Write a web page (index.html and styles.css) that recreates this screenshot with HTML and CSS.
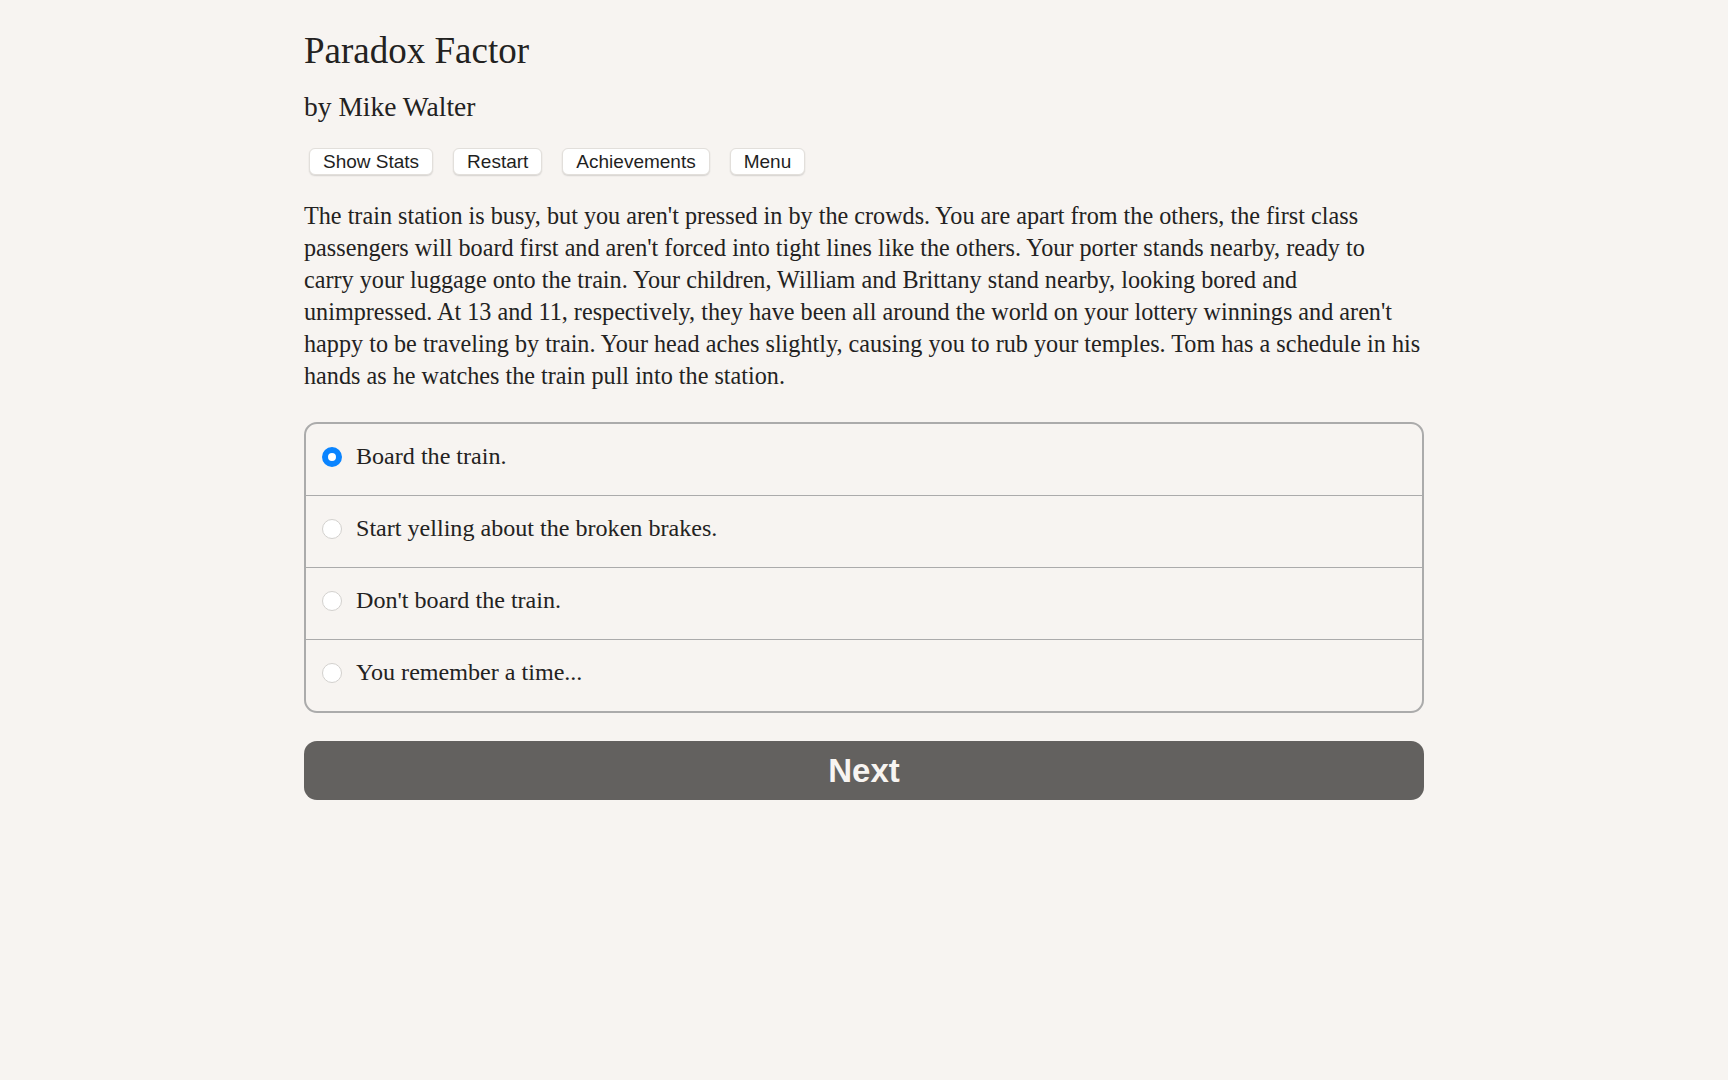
FILE: index.html
```html
<!DOCTYPE html>
<html lang="en">
<head>
<meta charset="utf-8">
<title>Paradox Factor</title>
<link rel="stylesheet" href="styles.css">
</head>
<body>
<main class="page">
  <h1 class="title">Paradox Factor</h1>
  <h2 class="author">by Mike Walter</h2>
  <nav class="toolbar">
    <button class="tool-btn">Show Stats</button>
    <button class="tool-btn">Restart</button>
    <button class="tool-btn">Achievements</button>
    <button class="tool-btn">Menu</button>
  </nav>
  <p class="story">The train station is busy, but you aren't pressed in by the crowds. You are apart from the others, the first class<br>
passengers will board first and aren't forced into tight lines like the others. Your porter stands nearby, ready to<br>
carry your luggage onto the train. Your children, William and Brittany stand nearby, looking bored and<br>
unimpressed. At 13 and 11, respectively, they have been all around the world on your lottery winnings and aren't<br>
happy to be traveling by train. Your head aches slightly, causing you to rub your temples. Tom has a schedule in his<br>
hands as he watches the train pull into the station.</p>
  <form class="choices">
    <label class="choice">
      <span class="radio radio-on"></span>
      <span class="choice-text">Board the train.</span>
    </label>
    <label class="choice">
      <span class="radio"></span>
      <span class="choice-text">Start yelling about the broken brakes.</span>
    </label>
    <label class="choice">
      <span class="radio"></span>
      <span class="choice-text">Don't board the train.</span>
    </label>
    <label class="choice">
      <span class="radio"></span>
      <span class="choice-text">You remember a time...</span>
    </label>
  </form>
  <button class="next-btn">Next</button>
</main>
</body>
</html>
```
FILE: styles.css
```css
html, body {
  margin: 0;
  padding: 0;
  background: #f7f4f1;
}
body {
  color: #232221;
  font-family: "Liberation Serif", "Times New Roman", serif;
}
.page {
  width: 1120px;
  margin: 0 auto;
  padding-top: 29px;
}
.title {
  margin: 0;
  font-size: 37px;
  line-height: 44px;
  font-weight: normal;
}
.author {
  margin: 17px 0 0;
  font-size: 27.5px;
  line-height: 34px;
  font-weight: normal;
}
.toolbar {
  display: flex;
  gap: 20px;
  margin: 24px 0 0 5px;
}
.tool-btn {
  box-sizing: border-box;
  height: 27px;
  font-family: "Liberation Sans", Arial, sans-serif;
  font-size: 19px;
  line-height: 21px;
  color: #1f1f1f;
  background: #ffffff;
  border: 1px solid #e2dfdb;
  border-radius: 6px;
  padding: 0 13px;
  box-shadow: 0 1px 1.5px rgba(0, 0, 0, 0.14);
}
.story {
  margin: 25px 0 0;
  font-size: 24.2px;
  line-height: 32px;
  white-space: nowrap;
}
.choices {
  margin-top: 30px;
  border: 2px solid #ababab;
  border-radius: 13px;
  display: flex;
  flex-direction: column;
}
.choice {
  display: flex;
  align-items: center;
  gap: 14px;
  padding: 16px 16px 23px;
  font-size: 24.1px;
  line-height: 32px;
  border-top: 1px solid #ababab;
}
.choice:first-child {
  border-top: none;
}
.radio {
  width: 20px;
  height: 20px;
  margin-top: 2px;
  box-sizing: border-box;
  border-radius: 50%;
  background: #ffffff;
  border: 1px solid #d3d1ce;
  flex: none;
}
.radio-on {
  background: #ffffff;
  border: 6.5px solid #0a84ff;
}
.next-btn {
  display: block;
  width: 100%;
  height: 59px;
  margin-top: 28px;
  border: none;
  border-radius: 13px;
  background: #63615f;
  color: #f7f4f1;
  font-family: "Liberation Sans", Arial, sans-serif;
  font-weight: bold;
  font-size: 33px;
}
```
